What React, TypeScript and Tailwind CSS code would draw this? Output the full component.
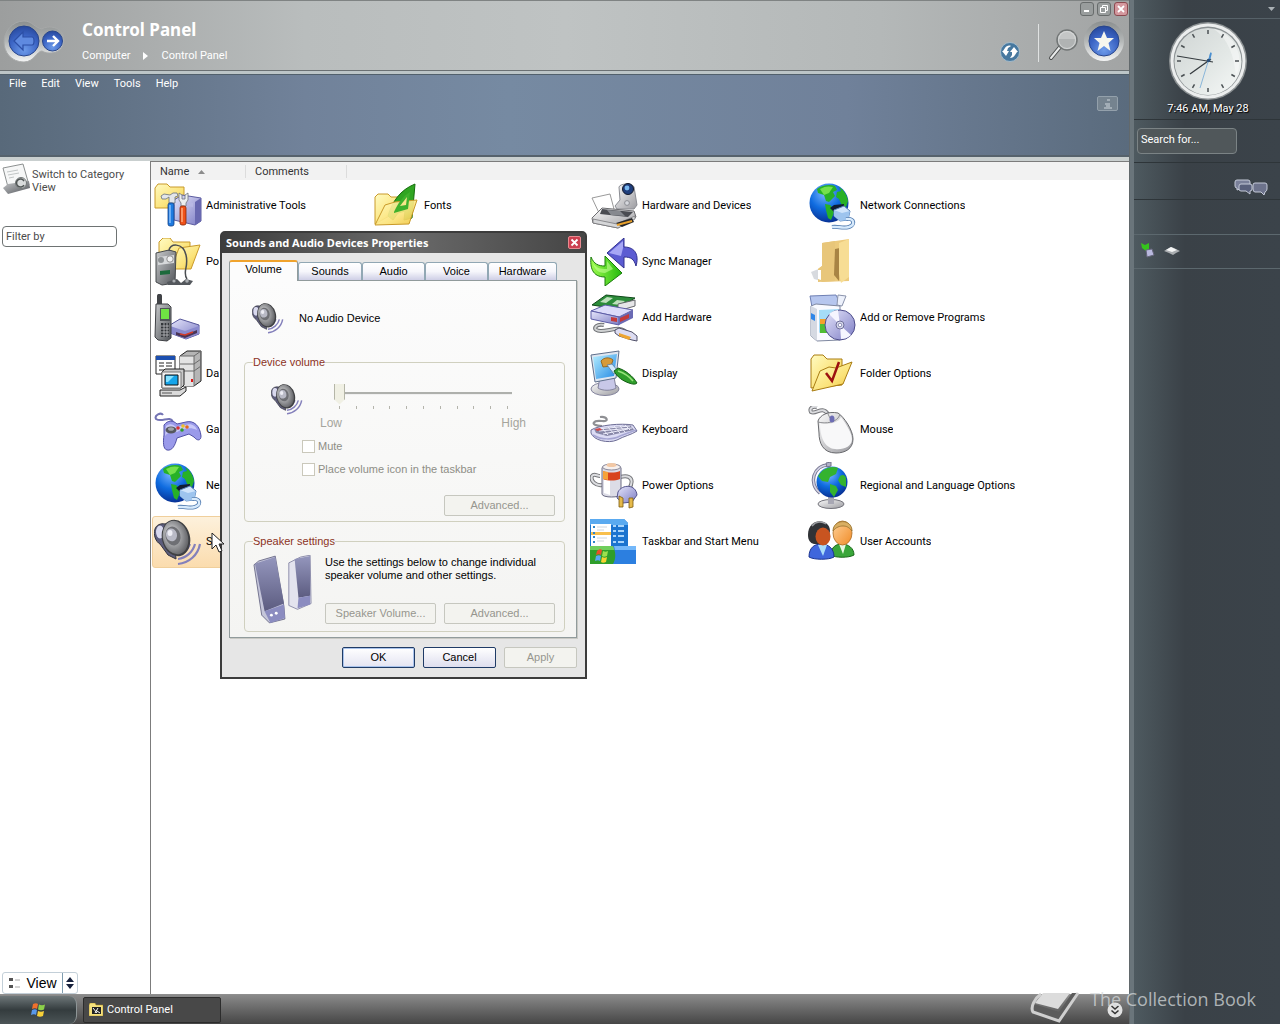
import React, { useState } from 'react';

type IconProps = { className?: string };

function Defs() {
  return (
    <svg width="0" height="0" className="absolute" aria-hidden="true">
      <defs>
        <linearGradient id="folder" x1="0" y1="0" x2="1" y2="1">
          <stop offset="0" stopColor="#fffbc2" />
          <stop offset="0.6" stopColor="#fbe37a" />
          <stop offset="1" stopColor="#eec23c" />
        </linearGradient>
        <linearGradient id="purple" x1="0" y1="0" x2="1" y2="1">
          <stop offset="0" stopColor="#e6e6fb" />
          <stop offset="1" stopColor="#7c7cc4" />
        </linearGradient>
        <linearGradient id="grey" x1="0" y1="0" x2="1" y2="1">
          <stop offset="0" stopColor="#fbfbfb" />
          <stop offset="1" stopColor="#9b9ba0" />
        </linearGradient>
        <linearGradient id="dark" x1="0" y1="0" x2="1" y2="1">
          <stop offset="0" stopColor="#c9cbcd" />
          <stop offset="1" stopColor="#505358" />
        </linearGradient>
        <linearGradient id="green" x1="0" y1="0" x2="1" y2="0">
          <stop offset="0" stopColor="#9dfc4e" />
          <stop offset="1" stopColor="#22b80c" />
        </linearGradient>
        <linearGradient id="screen" x1="0" y1="0" x2="1" y2="1">
          <stop offset="0" stopColor="#b7efff" />
          <stop offset="1" stopColor="#2188e4" />
        </linearGradient>
        <linearGradient id="skin" x1="0" y1="0" x2="1" y2="1">
          <stop offset="0" stopColor="#ffd199" />
          <stop offset="1" stopColor="#f08c28" />
        </linearGradient>
        <linearGradient id="chrome" x1="0" y1="0" x2="0" y2="1">
          <stop offset="0" stopColor="#8b8f8f" />
          <stop offset="0.5" stopColor="#b4b7b7" />
          <stop offset="1" stopColor="#f4f5f5" />
        </linearGradient>
        <linearGradient id="speaker" x1="0" y1="0" x2="0" y2="1">
          <stop offset="0" stopColor="#9496bd" />
          <stop offset="1" stopColor="#5c5c80" />
        </linearGradient>
        <radialGradient id="ball" cx="0.4" cy="0.25" r="0.8">
          <stop offset="0" stopColor="#7db8ff" />
          <stop offset="0.5" stopColor="#0f6ce0" />
          <stop offset="1" stopColor="#062a8c" />
        </radialGradient>
        <radialGradient id="navBlue" cx="0.5" cy="0.8" r="0.8">
          <stop offset="0" stopColor="#6d9bea" />
          <stop offset="0.6" stopColor="#3b64c4" />
          <stop offset="1" stopColor="#27489c" />
        </radialGradient>
        <radialGradient id="cone" cx="0.4" cy="0.4" r="0.7">
          <stop offset="0" stopColor="#f2f2f2" />
          <stop offset="0.5" stopColor="#9a9b9e" />
          <stop offset="1" stopColor="#55565a" />
        </radialGradient>
        <linearGradient id="face" x1="0" y1="0" x2="1" y2="1">
          <stop offset="0" stopColor="#cfd4d3" />
          <stop offset="0.6" stopColor="#e4e9e7" />
          <stop offset="1" stopColor="#f7f9f8" />
        </linearGradient>
      </defs>
    </svg>
  );
}

function AdminToolsIcon() {
  return (
    <svg viewBox="0 0 48 48" className="size-12 shrink-0">
      <path d="M1 26V6l3-4h9l3 3h14v21z" fill="url(#folder)" stroke="#c99a2a" />
      <path d="M20 18l8-5 19 3v23l-6 4-21-5z" fill="url(#purple)" stroke="#5c5ca0" />
      <path d="M41 20v23l6-4V16z" fill="#6868b0" />
      <path d="M33 20l6 1v4l-6-1z" fill="#b9b9e4" />
      <path d="M7 14l3-2 6 1 3-2h4l1 3-3 1v6h-6v-6l-3 2H8z" fill="#e3e6ea" stroke="#66707c" strokeWidth="0.8" />
      <rect x="14" y="21" width="6" height="23" rx="2" fill="#1f7be0" stroke="#123f86" strokeWidth="0.8" />
      <path d="M16 23v18" stroke="#8ec4ff" strokeWidth="1.4" />
      <path d="M25 11v7l2 3v3h5v-3l2-3v-7l-3 2v4h-3v-4z" fill="#eceef0" stroke="#6d7279" strokeWidth="0.8" />
      <rect x="26" y="24" width="6" height="19" rx="2" fill="#f0521a" stroke="#8b2403" strokeWidth="0.8" />
      <path d="M28 26v14" stroke="#ffb488" strokeWidth="1.4" />
    </svg>
  );
}

function FontsIcon() {
  return (
    <svg viewBox="0 0 48 48" className="size-12 shrink-0">
      <path d="M3 42V15l3-3h10l3 3h14v10z" fill="url(#folder)" stroke="#c99a2a" />
      <path d="M16 34C20 20 28 8 43 2l-3 34-8 2 1-9-7 2-5 7z" fill="#31a522" stroke="#156e0c" />
      <path d="M28 25l7-2 1-11z" fill="#d8f5c6" />
      <path d="M3 43l10-20 10-3 22-2-8 24z" fill="url(#folder)" fillOpacity="0.92" stroke="#c99a2a" />
      <path d="M22 30c4-9 9-16 16-20l-2 17-14 4z" fill="#3fb12c" />
      <path d="M28 24l6-1 1-8z" fill="#f9e68a" />
    </svg>
  );
}

function HardwareIcon() {
  return (
    <svg viewBox="0 0 48 48" className="size-12 shrink-0">
      <path d="M29 5c1-4 14-4 15 0l3 18-3 4H27l-2-3 5-6z" fill="url(#grey)" stroke="#8b8d93" />
      <circle cx="38" cy="7" r="5.5" fill="#1f3e7c" stroke="#11182a" />
      <circle cx="37" cy="6" r="2.4" fill="#79b7ef" />
      <circle cx="37" cy="21" r="2.4" fill="#d6d8dd" stroke="#8b8d93" />
      <path d="M2 16l18-4 4 15-14 6z" fill="#fff" stroke="#9a9a9a" />
      <path d="M2 36l10-10 32 3 2 6-18 11-25-5z" fill="url(#grey)" stroke="#6c6c70" />
      <path d="M12 27l31 3-5 5-28-3z" fill="#4a4c52" />
      <path d="M17 28l13 1 5 5-14-1z" fill="#86898f" />
      <path d="M3 37l24 5 18-8v3L28 46 3 41z" fill="#d5d6d8" stroke="#78787c" strokeWidth="0.8" />
      <path d="M26 41l16-5 2 4-12 5z" fill="#25262a" />
      <path d="M27 43l15-4" stroke="#e8a02a" strokeWidth="2" />
    </svg>
  );
}

function NetworkIcon() {
  return (
    <svg viewBox="0 0 48 48" className="size-12 shrink-0">
      <circle cx="21" cy="21" r="19.5" fill="url(#ball)" />
      <path d="M9 7C14 3 22 2 27 4l2 4-4 2 2 4-6 6-3-1-2-6-6-2zM31 5c5 3 8 8 9 14l-2 6-4-1-3-7-3-2 1-5 4-1zM17 22l5 1 5 5-4 10-3-2-2-8z" fill="#27b127" />
      <path d="M12 7c5-3 9-3 13-2l-4 6-5 2z" fill="#75e04c" />
      <path d="M22 26l4-3 10-1v7l-9 2z" fill="#101c33" />
      <path d="M26 28l10-4 6 5-2 9-8 1-6-5z" fill="#cfe4fb" stroke="#5782b9" />
      <path d="M26 28l8 3 8-2-2 9-8 1-6-5z" fill="#9dc4ee" />
      <path d="M38 37c9-1 9 6 3 8-7 2-10-1-17 0" fill="none" stroke="#4d78ae" strokeWidth="4" />
      <path d="M38 37c9-1 9 6 3 8-7 2-10-1-17 0" fill="none" stroke="#d7eafc" strokeWidth="2.4" />
    </svg>
  );
}

function MediaDeviceIcon() {
  return (
    <svg viewBox="0 0 48 48" className="size-12 shrink-0">
      <path d="M5 28V4l4-4h7l3 4h17v18z" fill="url(#folder)" stroke="#c99a2a" />
      <path d="M17 31l8-21 21-3-9 24z" fill="url(#folder)" stroke="#c99a2a" />
      <path d="M2 15l13-3 7 2-1 31-13 2-6-3z" fill="url(#dark)" stroke="#45484b" />
      <path d="M4 19l16-2v8L4 27z" fill="#d7d9db" />
      <circle cx="7" cy="22" r="3" fill="#8d9194" />
      <circle cx="16" cy="21" r="3.2" fill="#f1f2f3" stroke="#777" strokeWidth="0.8" />
      <path d="M6 33l10-1v4L6 37z" fill="#1c6a3c" />
      <path d="M15 13c0-8 14-9 17 4 3 12-4 17 1 24" fill="none" stroke="#4b4e52" strokeWidth="1.5" />
      <path d="M13 44l10-3 4 4 5-4 7 2-3 4H14z" fill="#54585d" />
      <circle cx="20" cy="43" r="1.6" fill="#a9adb1" />
      <circle cx="33" cy="43" r="1.8" fill="#a9adb1" />
    </svg>
  );
}

function SyncIcon() {
  return (
    <svg viewBox="0 0 48 48" className="size-12 shrink-0">
      <path d="M17 15L34 0v9c12 0 15 9 12 19-2-7-5-9-12-9v11z" fill="#5c5cd2" stroke="#30308f" />
      <path d="M19 15L33 3v7l-2 8z" fill="#a7a7f5" />
      <path d="M1 19c3 7 7 9 14 9V18l17 17-17 13v-9C2 39 0 29 1 19z" fill="url(#green)" stroke="#1b7a0d" />
      <path d="M3 25c3 5 7 6 14 6v-8l6 8-8 4C8 35 4 31 3 25z" fill="#c5ff94" opacity="0.6" />
    </svg>
  );
}

function TallFolderIcon() {
  return (
    <svg viewBox="0 0 48 48" className="size-12 shrink-0">
      <path d="M3 34l10-4v13l-7-2z" fill="#c6cbd2" opacity="0.7" />
      <path d="M14 5l27-4v42l-27 1-4-3V31l4-3z" fill="#ecca7c" />
      <path d="M14 5l13-2v40l-17 1V31l4-3z" fill="#e8c67a" />
      <path d="M27 11l5-1-1 33-5-6z" fill="#a88444" />
      <path d="M31 5l10-4v38l-8 6-2-9z" fill="#f7dd94" />
      <path d="M10 32h3v10l-3-1z" fill="#fff" />
    </svg>
  );
}

function PhoneIcon() {
  return (
    <svg viewBox="0 0 48 48" className="size-12 shrink-0">
      <path d="M16 31l10-6 19 6v9l-13 5-16-6z" fill="url(#purple)" stroke="#55559a" />
      <path d="M16 32l15 5 14-5v8l-13 5-16-6z" fill="#8a8ace" />
      <path d="M22 38l9 3 12-5v3l-12 5-9-3z" fill="#4a3556" />
      <path d="M26 40l5 1 8-3" stroke="#d33b28" strokeWidth="1.5" fill="none" />
      <path d="M3 2c0-3 5-3 5 0v8H3z" fill="#414347" />
      <path d="M2 10h12l3 3v31l-4 3-9-1-3-3z" fill="url(#dark)" stroke="#3f4145" />
      <path d="M6 14h10v13H6z" fill="#505458" />
      <path d="M7 15h8v10H7z" fill="#6fe243" />
      <path d="M7 29h8v14H7z" fill="#33363a" />
      <path d="M7 32h8M7 35h8M7 38h8M7 41h8M10 29v14M13 29v14" stroke="#c0c2c5" strokeWidth="0.8" />
    </svg>
  );
}

function AddHardwareIcon() {
  return (
    <svg viewBox="0 0 48 48" className="size-12 shrink-0">
      <path d="M2 11L16 1l29 3-17 11z" fill="#2c8c3a" stroke="#10491a" />
      <path d="M10 8l7-5 6 1-7 5zM22 10l5-4 8 1-5 4z" fill="#bfe0bd" />
      <path d="M28 10l17-4v6l-17 5z" fill="#e6e6e8" stroke="#66686c" />
      <path d="M1 17l14-6 28 5-14 7z" fill="#dcdcfa" stroke="#5d5da6" />
      <path d="M1 17l28 6v8L1 25z" fill="url(#purple)" stroke="#5d5da6" />
      <path d="M29 23l14-7v8l-14 7z" fill="#6a6ab4" />
      <path d="M21 23l6 1v4l-6-1zM30 24l9-4v4l-9 4z" fill="#c43a3a" />
      <path d="M14 31c-9-2-13 6-3 6 9 0 20-6 26 2" fill="none" stroke="#707276" strokeWidth="4" />
      <path d="M14 31c-9-2-13 6-3 6 9 0 20-6 26 2" fill="none" stroke="#cfd1d2" strokeWidth="2" />
      <path d="M25 36l4-2 13 4 5 4v5l-5-1-13-4-4-3z" fill="#dcdcf2" stroke="#505068" />
      <path d="M29 39l12 4-2 3-10-4z" fill="#eda532" />
    </svg>
  );
}

function ProgramsIcon() {
  return (
    <svg viewBox="0 0 48 48" className="size-12 shrink-0">
      <path d="M2 2l26-1 4 8-6 4H4z" fill="#b6c6ee" stroke="#6f80b4" />
      <path d="M30 1l8 1-4 10-5-1z" fill="#edf1fb" stroke="#8a93ac" />
      <path d="M3 12l5-2 24 2v34l-23 1-6-5z" fill="#f9faff" stroke="#7f88a0" />
      <path d="M3 12l6 3v32l-6-5z" fill="#d5d9e2" />
      <path d="M3 19l4 2v6l-4-2z" fill="#2f86e8" />
      <path d="M11 16l20-1v11L11 39z" fill="#a5dcf7" />
      <path d="M12 27h8v12h-8z" fill="#4fbd33" />
      <path d="M12 25h8v5h-8z" fill="#f4a12a" />
      <circle cx="32" cy="31" r="15" fill="url(#purple)" stroke="#4d4d8b" />
      <path d="M32 31L21 20a15 15 0 0 1 9-4zM32 31l11 10a15 15 0 0 1-10 4z" fill="#f5f5ff" />
      <circle cx="32" cy="31" r="4" fill="#d9dcec" stroke="#6f6f9b" />
      <circle cx="32" cy="31" r="1.8" fill="#fff" stroke="#8e8eb8" />
    </svg>
  );
}

function DataIcon() {
  return (
    <svg viewBox="0 0 48 48" className="size-12 shrink-0">
      <path d="M26 6l7-5h14v30l-7 5H26z" fill="#b5b5b5" stroke="#222" />
      <path d="M26 6h14v30H26z" fill="#e3e3e3" />
      <path d="M26 6h14l7-5M26 14h14l7-5M26 21h14l7-5M40 6v30" fill="none" stroke="#6b6b6b" />
      <path d="M37 29h2v3h-2z" fill="#e01818" />
      <path d="M2 6h19v18H2z" fill="#fff" stroke="#222" />
      <path d="M2 6h19v4H2z" fill="#1c4fb0" />
      <path d="M5 13h5M12 13h6M5 16h5M12 16h6M5 20h5M12 20h6" stroke="#222" />
      <path d="M8 22l3-3h19v16l-3 3H8z" fill="#c9c9c9" stroke="#222" />
      <path d="M8 22h19v16H8z" fill="#f0f0f0" stroke="#777" />
      <path d="M11 25h13v10H11z" fill="#16a5ea" stroke="#111" />
      <path d="M12 26h8l-6 6h-2z" fill="#86e2ff" />
      <path d="M6 40h20l6-3v4l-6 5H6z" fill="#dadada" stroke="#222" />
      <path d="M8 43h10" stroke="#555" />
    </svg>
  );
}

function DisplayIcon() {
  return (
    <svg viewBox="0 0 48 48" className="size-12 shrink-0">
      <ellipse cx="15" cy="39" rx="14" ry="6.5" fill="url(#grey)" stroke="#83839c" />
      <path d="M10 27h14l2 11c-4 3-14 3-18 0z" fill="#c8c8e8" stroke="#83839c" />
      <path d="M1 5l28-4-3 27-21 4z" fill="#dfe6f0" stroke="#5e6f8c" />
      <path d="M3 7l24-3-3 22-18 3z" fill="url(#screen)" />
      <path d="M11 11c3-4 9-4 12-1l-2 6-8 1z" fill="#d69a3a" stroke="#8d5a10" strokeWidth="0.8" />
      <path d="M17 15l5-1 6 7-4 3z" fill="#cfe8fb" stroke="#5d7c9c" strokeWidth="0.8" />
      <path d="M24 21l4-3c7 2 15 8 19 15-2 2-5 1-8 0-6-2-12-6-15-12z" fill="#2f9e2b" stroke="#125c12" />
      <path d="M28 21c6 2 11 5 15 10" stroke="#98e27c" strokeWidth="1.5" fill="none" />
    </svg>
  );
}

function FolderOptionsIcon() {
  return (
    <svg viewBox="0 0 48 48" className="size-12 shrink-0">
      <path d="M3 38V9l3-4h9l4 4h15v26z" fill="url(#folder)" stroke="#a97c12" />
      <path d="M4 41l8-20 9-4 7 1 16-6-9 22z" fill="url(#folder)" stroke="#a97c12" />
      <path d="M18 23l6 8 7-19" fill="none" stroke="#9c1010" strokeWidth="2.5" />
    </svg>
  );
}

function GameIcon() {
  return (
    <svg viewBox="0 0 48 48" className="size-12 shrink-0">
      <path d="M19 16c-3-7-11 1-17-3-2-4 5-7 7-4" fill="none" stroke="#7474b4" strokeWidth="2" />
      <path d="M10 19c4-5 9-5 13-1l9-2c8-2 14 4 15 14 0 5-4 5-7 1l-5-3-12 4c-2 8-5 13-10 12-4-1-4-8-3-15z" fill="#9a9aea" stroke="#5151a6" />
      <path d="M12 20c4-3 7-2 10 1l10-2c5-2 10 1 11 5-6-3-14-2-20 2-6-1-10 1-12 4z" fill="#d4d4fb" opacity="0.8" />
      <ellipse cx="17" cy="24" rx="5.5" ry="3.5" fill="#55575e" />
      <ellipse cx="17" cy="23" rx="3" ry="1.8" fill="#9fa3a9" />
      <circle cx="24" cy="22" r="1.8" fill="#d83030" />
      <circle cx="29" cy="20" r="1.8" fill="#f0c128" />
      <circle cx="28" cy="24" r="1.8" fill="#2f9e2b" />
      <circle cx="33" cy="21" r="1.8" fill="#e26a1c" />
    </svg>
  );
}

function KeyboardIcon() {
  return (
    <svg viewBox="0 0 48 48" className="size-12 shrink-0">
      <path d="M12 20c-14-1-8-6 0-5s5-5-2-4" fill="none" stroke="#8f9094" strokeWidth="2.2" />
      <path d="M1 24c8-5 30-7 42-5l4 6c-6 4-13 5-20 9-9 4-24 0-26-7z" fill="#dcdcf4" stroke="#6c6c94" />
      <path d="M4 23l36-4 4 5-27 6-11-3z" fill="#8888a8" />
      <path d="M7 23l33-3M9 25l33-3M13 28l25-5M12 22l6 7M18 21l6 7M24 20l6 7M30 20l5 6M35 19l5 5" stroke="#ececfa" strokeWidth="1" />
      <path d="M5 23l5-1 2 2-5 1z" fill="#d34a4a" />
      <path d="M3 29c8 5 20 5 27 1l16-6" fill="none" stroke="#a5a5d2" strokeWidth="1.5" />
    </svg>
  );
}

function MouseIcon() {
  return (
    <svg viewBox="0 0 48 48" className="size-12 shrink-0">
      <path d="M20 8C14-1 8 9 3 6c-2-4 2-6 6-5" fill="none" stroke="#77787c" strokeWidth="4" />
      <path d="M20 8C14-1 8 9 3 6c-2-4 2-6 6-5" fill="none" stroke="#dcdde0" strokeWidth="2" />
      <path d="M10 15c2-6 10-10 20-8 6 4 15 17 15 26 0 10-8 14-17 14-13 0-17-10-17-20z" fill="url(#grey)" stroke="#68696d" />
      <path d="M12 17c5 2 18 1 21-6 5 7 11 16 11 22 0 8-9 11-17 10-11-1-15-13-15-26z" fill="#f8f8f9" />
      <path d="M10 16c7 2 20 1 22-8M19 6l3 6" fill="none" stroke="#8c8d91" />
      <ellipse cx="24" cy="13" rx="2.5" ry="3.5" fill="#6d6db4" />
    </svg>
  );
}

function PowerIcon() {
  return (
    <svg viewBox="0 0 48 48" className="size-12 shrink-0">
      <path d="M12 23C6 24 0 19 2 14c2-3 5 0 8 0M30 15c12-3 14 4 9 12" fill="none" stroke="#77787c" strokeWidth="4" />
      <path d="M12 23C6 24 0 19 2 14c2-3 5 0 8 0M30 15c12-3 14 4 9 12" fill="none" stroke="#dcdde0" strokeWidth="2" />
      <path d="M12 6c0-4 19-4 19 0v26c0 4-19 4-19 0z" fill="#dcdce6" stroke="#6c6c84" />
      <path d="M14 18h6v15l-6-2z" fill="#fff" />
      <ellipse cx="21.5" cy="5" rx="9" ry="3" fill="#f6f0ee" stroke="#8a8a9c" />
      <ellipse cx="21.5" cy="3" rx="5" ry="2" fill="#f2c8a5" />
      <path d="M13 9c5 2 12 2 17 0v8c-5 2-12 2-17 0z" fill="#d8441e" />
      <path d="M13 9l5 1v8l-5-1z" fill="#f6a23a" />
      <path d="M28 30c4-8 18-8 19 3l-5 7-9 1-6-5z" fill="url(#purple)" stroke="#55558e" />
      <path d="M29 34l4 2v9h-4zM39 36h4v9l-4 1z" fill="#e5b94a" stroke="#7c5c10" strokeWidth="0.8" />
    </svg>
  );
}

function RegionalIcon() {
  return (
    <svg viewBox="0 0 48 48" className="size-12 shrink-0">
      <ellipse cx="23" cy="42" rx="13" ry="4.5" fill="url(#grey)" stroke="#74747c" />
      <path d="M20 34h6v8h-6z" fill="#a8a8b4" />
      <path d="M21 3C5 3 0 22 12 31" fill="none" stroke="#7a7a94" strokeWidth="3.5" />
      <path d="M21 3C5 3 0 22 12 31" fill="none" stroke="#d4d4e6" strokeWidth="1.5" />
      <circle cx="24" cy="20" r="15.5" fill="url(#ball)" />
      <path d="M14 9c5-4 12-5 16-3l-2 6-6 3-2 5-6-1-4-5zM32 14c3-2 5-1 6 2v9l-5-2-3-5zM22 22l6 2 2 4-4 7-4-5z" fill="#34b32f" />
      <path d="M18 1l5-1v4l-4 1z" fill="#b0b0c8" stroke="#74748c" />
    </svg>
  );
}

function SoundIcon({ className = 'size-12' }: IconProps) {
  return (
    <svg viewBox="0 0 48 48" className={`${className} shrink-0`}>
      <path d="M24 46c11-1 20-9 22-20M24 41c8-1 15-7 17-15M25 36c5-1 9-5 11-10" fill="none" stroke="#8480bb" strokeWidth="2.2" />
      <path d="M1 11c1-4 6-6 10-5l8-3 3 38-8-4-8-11c-4-2-7-9-5-15z" fill="#5d5d7c" stroke="#35353f" />
      <ellipse cx="6" cy="14" rx="4" ry="6.5" fill="#d9d9ee" />
      <ellipse cx="22" cy="20" rx="14" ry="18.5" fill="#3f4043" transform="rotate(-14 22 20)" />
      <ellipse cx="21.500" cy="19.5" rx="12.5" ry="17" fill="url(#cone)" transform="rotate(-14 21.5 19.5)" />
      <ellipse cx="19" cy="18" rx="7.5" ry="9.5" fill="#6e6f74" transform="rotate(-14 19 18)" />
      <ellipse cx="17.5" cy="17" rx="5.5" ry="6.5" fill="#b9bac6" transform="rotate(-14 17 17)" />
      <ellipse cx="16" cy="15" rx="2.5" ry="3" fill="#ededf4" />
    </svg>
  );
}

function TaskbarIcon() {
  return (
    <svg viewBox="0 0 48 48" className="size-12 shrink-0">
      <path d="M0 1h34l4 4v24H0z" fill="#1c74cf" />
      <path d="M0 1h34l4 4v2H0z" fill="#5aaaf0" />
      <path d="M1 6h20v22H1z" fill="#fff" />
      <path d="M1 14h20v3H1z" fill="#f8bf4c" />
      <path d="M7 9h10M7 12h7M7 20h10M7 23h7" stroke="#cfd6de" />
      <path d="M3 9h2M3 15h2M3 19h2M3 24h2" stroke="#2f86c8" strokeWidth="2" />
      <path d="M23 8h3M23 13h3M23 18h3M23 24h3M28 8h6M28 13h6M28 18h6M28 24h6" stroke="#a8d4fa" strokeWidth="2" />
      <path d="M0 28h26v18H0z" fill="#2f9e2b" />
      <path d="M0 28h26v4H0z" fill="#6fce5c" />
      <path d="M23 28h23v18H23c3-5 3-12 0-18z" fill="#2c7fe0" />
      <path d="M24 28h22v4H25z" fill="#74b8fa" />
      <path d="M7 33c2-2 4-2 5-1l-1 5c-1-1-3-1-5 0z" fill="#e8502a" />
      <path d="M13 33c2 1 3 1 5 0l-1 5c-2 1-4 1-5 0z" fill="#9be04e" />
      <path d="M6 38c2-1 4-1 5 0l-1 5c-1-1-3-1-5 0z" fill="#5aa9f4" />
      <path d="M12 39c2 1 3 1 5 0l-1 5c-2 1-4 1-5 0z" fill="#f8d230" />
    </svg>
  );
}

function UsersIcon() {
  return (
    <svg viewBox="0 0 48 48" className="size-12 shrink-0">
      <path d="M23 37c0-8 5-11 11-11s12 4 12 11c-5 3-19 3-23 0z" fill="#3aa63a" stroke="#186818" />
      <path d="M31 26h7l-3 10z" fill="#e6f8e0" />
      <ellipse cx="34.5" cy="15" rx="9.5" ry="12" fill="url(#skin)" stroke="#a86820" strokeWidth="0.8" />
      <path d="M25 13c0-12 19-13 19 0-3-4-6-5-9-5s-7 1-10 5z" fill="#d9ae62" stroke="#94702c" strokeWidth="0.8" />
      <path d="M1 39c0-9 5-13 12-13s13 4 13 13c-5 3-20 3-25 0z" fill="#3f66dc" stroke="#1b3490" />
      <path d="M10 27h9l-4 11z" fill="#a9dcfa" />
      <path d="M0 17C0-1 22 0 22 13l-3 13H6c-4-1-6-4-6-9z" fill="#303236" />
      <ellipse cx="15" cy="18.5" rx="7.500" ry="9" fill="#c85420" />
      <path d="M4 8c4-5 10-5 14-2" stroke="#9a9ca0" strokeWidth="1.5" fill="none" />
    </svg>
  );
}

function SpeakersPicture() {
  return (
    <svg viewBox="0 0 62 71" className="h-[69px] w-[60px] shrink-0">
      <path d="M1 10l5-4 17-5 9 52 1 13-16 4-8-8z" fill="#c5c6da" stroke="#585878" strokeWidth="0.8" />
      <path d="M2 9l21-7 9 48-20 8z" fill="url(#speaker)" />
      <path d="M12 58l20-7 1 14-15 5z" fill="#8b8cc0" />
      <circle cx="19" cy="62" r="1.5" fill="#fff" />
      <circle cx="24" cy="60" r="1.5" fill="#fff" />
      <path d="M37 8L49 2l10-2 1 50-14 6-9-4z" fill="#e3e3ee" stroke="#77779a" strokeWidth="0.8" />
      <path d="M43 4l16-3v41l-12 2z" fill="url(#speaker)" />
      <path d="M47 44l12-2v9l-13 4z" fill="#8b8cc0" />
    </svg>
  );
}

function WindowsFlag() {
  return (
    <svg viewBox="0 0 16 16" className="size-4">
      <path d="M3 2c2-1 4-1 5 0L7 7C6 6 4 6 2 7z" fill="#f0702c" />
      <path d="M9 2.500c2 1 4 1 6 0l-1 5c-2 1-4 1-6 0z" fill="#8cd04a" />
      <path d="M2 8c2-1 4-1 5 0l-1 5c-1-1-3-1-5 0z" fill="#5a98ea" />
      <path d="M8 9c2 1 4 1 6 0l-1 5c-2 1-4 1-6 0z" fill="#f8d038" />
    </svg>
  );
}

function NavButtons() {
  return (
    <div className="relative h-11 w-16 shrink-0">
      <svg viewBox="0 0 64 44" className="h-11 w-16">
        <path d="M22 2c8 0 11 7 18 8 5-4 22-3 22 11S46 36 40 32c-5 0-8 11-18 11C9 43 2 33 2 23S10 2 22 2z" fill="url(#chrome)" stroke="#a7a9a9" />
        <circle cx="22" cy="22" r="15" fill="url(#navBlue)" stroke="#28468c" />
        <path d="M12 22l9-9v5h9q2 0 2 4t-2 4h-9v5z" fill="#5f8ae0" stroke="#2c4fa6" strokeWidth="1.2" />
        <circle cx="50.500" cy="22" r="10" fill="url(#navBlue)" stroke="#28468c" />
        <path d="M45 22h10M51 17l5 5-5 5" fill="none" stroke="#fff" strokeWidth="2.4" />
      </svg>
      <button aria-label="Back" className="absolute left-1.5 top-1.5 size-8 rounded-full" />
      <button aria-label="Forward" className="absolute left-10 top-3 size-5 rounded-full" />
    </div>
  );
}

function Clock() {
  const ticks = Array.from({ length: 12 }, (_, i) => i * 30);
  return (
    <svg viewBox="0 0 80 80" className="size-20">
      <circle cx="40" cy="40" r="39" fill="#8d9294" />
      <circle cx="40" cy="40" r="37.5" fill="#eceeee" />
      <circle cx="40" cy="40" r="34.5" fill="#8b9193" />
      <circle cx="40" cy="40.5" r="33.5" fill="url(#face)" />
      <path d="M46 8a33 33 0 0 1 22 47C66 34 60 18 46 8z" fill="#fff" opacity="0.4" />
      {ticks.map((a) => (
        <path key={a} d="M40 9v4" stroke="#4b5154" strokeWidth="1.5" transform={`rotate(${a} 40 40)`} />
      ))}
      <path d="M45 41L9 35" stroke="#353b3f" strokeWidth="1.1" />
      <path d="M43 38L22 53" stroke="#353b3f" strokeWidth="1.3" />
      <path d="M43 31L32 67" stroke="#7fb0d8" strokeWidth="0.9" />
      <path d="M43 32l-2 8" stroke="#4a8fd0" strokeWidth="1.8" />
      <circle cx="40.5" cy="39.5" r="1.8" fill="#2b4f78" />
    </svg>
  );
}

const items: { id: string; name: string; icon: React.ReactNode; selected?: boolean }[] = [
  { id: 'admin', name: 'Administrative Tools', icon: <AdminToolsIcon /> },
  { id: 'fonts', name: 'Fonts', icon: <FontsIcon /> },
  { id: 'hardware', name: 'Hardware and Devices', icon: <HardwareIcon /> },
  { id: 'network', name: 'Network Connections', icon: <NetworkIcon /> },
  { id: 'portable', name: 'Po', icon: <MediaDeviceIcon /> },
  { id: 'slot1', name: '', icon: null },
  { id: 'sync', name: 'Sync Manager', icon: <SyncIcon /> },
  { id: 'folder', name: '', icon: <TallFolderIcon /> },
  { id: 'phone', name: '', icon: <PhoneIcon /> },
  { id: 'slot2', name: '', icon: null },
  { id: 'addhw', name: 'Add Hardware', icon: <AddHardwareIcon /> },
  { id: 'programs', name: 'Add or Remove Programs', icon: <ProgramsIcon /> },
  { id: 'data', name: 'Da', icon: <DataIcon /> },
  { id: 'slot3', name: '', icon: null },
  { id: 'display', name: 'Display', icon: <DisplayIcon /> },
  { id: 'folderopts', name: 'Folder Options', icon: <FolderOptionsIcon /> },
  { id: 'game', name: 'Ga', icon: <GameIcon /> },
  { id: 'slot4', name: '', icon: null },
  { id: 'keyboard', name: 'Keyboard', icon: <KeyboardIcon /> },
  { id: 'mouse', name: 'Mouse', icon: <MouseIcon /> },
  { id: 'netsetup', name: 'Ne', icon: <NetworkIcon /> },
  { id: 'slot5', name: '', icon: null },
  { id: 'power', name: 'Power Options', icon: <PowerIcon /> },
  { id: 'regional', name: 'Regional and Language Options', icon: <RegionalIcon /> },
  { id: 'sounds', name: 'S', icon: <SoundIcon />, selected: true },
  { id: 'slot6', name: '', icon: null },
  { id: 'taskbar', name: 'Taskbar and Start Menu', icon: <TaskbarIcon /> },
  { id: 'users', name: 'User Accounts', icon: <UsersIcon /> },
];

const tabs = [
  { label: 'Volume', width: 'w-[69px]' },
  { label: 'Sounds', width: 'w-16' },
  { label: 'Audio', width: 'w-[63px]' },
  { label: 'Voice', width: 'w-[63px]' },
  { label: 'Hardware', width: 'w-[69px]' },
];

const disabledButton = 'rounded-[2px] border border-[#c6c7bf] bg-[#f3f3ef] text-[#96968e]';

function Dialog() {
  const [mute, setMute] = useState(false);
  const [tray, setTray] = useState(false);

  return (
    <div
      role="dialog"
      aria-label="Sounds and Audio Devices Properties"
      className="absolute left-[220px] top-[231px] w-[367px] rounded-t-[5px] border-2 border-[#3c3c3c] bg-[#e6e6e6] font-['Liberation_Sans',sans-serif] text-[11px] leading-[13px] text-black"
    >
      <div className="flex h-5 items-center justify-between bg-linear-to-r from-[#3d3d3d] via-[#6a6a6a] to-[#454545] px-1 pb-px">
        <h2 className="font-['Noto_Sans',sans-serif] text-[11px] font-bold text-white">Sounds and Audio Devices Properties</h2>
        <button aria-label="Close" className="flex size-[13px] items-center justify-center rounded-[2px] border border-[#e88a90] bg-[#cc4050]">
          <svg viewBox="0 0 9 9" className="size-[9px]">
            <path d="M1.500 1.500l6 6M7.500 1.500l-6 6" stroke="#fff" strokeWidth="1.8" />
          </svg>
        </button>
      </div>

      <div className="pb-[9px] pl-[7px] pr-2 pt-[7px]">
        <div role="tablist" className="relative flex items-end">
          {tabs.map((tab, i) => (
            <button
              key={tab.label}
              role="tab"
              aria-selected={i === 0}
              className={`${tab.width} ${
                i === 0
                  ? 'z-10 -mb-px h-[21px] rounded-t-[3px] border-x border-t-2 border-x-[#919b9c] border-t-[#f0a32c] bg-[#fcfcfc] pb-1'
                  : 'h-[18px] rounded-t-[3px] border border-b-0 border-[#91a7b4] bg-linear-to-b from-white via-[#f6f6fb] to-[#cfcfe6]'
              }`}
            >
              {tab.label}
            </button>
          ))}
        </div>

        <div className="border border-[#919b9c] bg-linear-to-b from-[#fcfcfc] to-[#f4f4f2] pb-[5px] pl-[14px] pr-[11px] pt-[21px] shadow-[1px_1px_0_#c9c9c4]">
          <div className="flex items-center gap-[15px] pl-2">
            <SoundIcon className="size-8" />
            <span>No Audio Device</span>
          </div>

          <fieldset className="mt-[22px] h-[166px] rounded-[4px] border border-[#d0d0bf] pl-2 pr-[9px] text-[#8e8e86]">
            <legend className="px-0 text-[#8c3324]">Device volume</legend>
            <div className="flex pl-[18px] pt-[14px]">
              <SoundIcon className="size-8" />
              <div className="ml-[31px] w-[184px]">
                <input
                  id="volume"
                  type="range"
                  min={0}
                  max={10}
                  defaultValue={0}
                  disabled
                  aria-label="Device volume"
                  className="block h-5 w-[178px] appearance-none bg-transparent [&::-webkit-slider-runnable-track]:h-[3px] [&::-webkit-slider-runnable-track]:border-t-2 [&::-webkit-slider-runnable-track]:border-[#aeb0ac] [&::-webkit-slider-runnable-track]:bg-[#f0f0f0] [&::-webkit-slider-thumb]:-mt-[10px] [&::-webkit-slider-thumb]:h-[21px] [&::-webkit-slider-thumb]:w-[11px] [&::-webkit-slider-thumb]:appearance-none [&::-webkit-slider-thumb]:bg-[linear-gradient(to_right,#b5b6a8_0_1px,#f0f0e4_1px_10px,#b5b6a8_10px)] [&::-webkit-slider-thumb]:[clip-path:polygon(0_0,100%_0,100%_75%,50%_100%,0_75%)]"
                />
                <div className="ml-[5px] mt-[3px] flex h-1 w-[169px] justify-between">
                  {Array.from({ length: 11 }, (_, i) => (
                    <span key={i} className="h-[3px] w-px bg-[#b4b4ac]" />
                  ))}
                </div>
              </div>
            </div>
            <div className="flex justify-between pl-[67px] pr-[29px] text-[12px] leading-4 text-[#a5a59d]">
              <span>Low</span>
              <span>High</span>
            </div>
            <div className="mt-[9px] flex flex-col gap-[10px] pl-[49px]">
              <label className="flex items-center gap-[3px]">
                <input type="checkbox" checked={mute} onChange={() => setMute(!mute)} className="size-[13px] appearance-none border border-[#cac8bb] bg-white" />
                Mute
              </label>
              <label className="flex items-center gap-[3px]">
                <input type="checkbox" checked={tray} onChange={() => setTray(!tray)} className="size-[13px] appearance-none border border-[#cac8bb] bg-white" />
                Place volume icon in the taskbar
              </label>
            </div>
            <div className="mt-[19px] flex justify-end">
              <button disabled className={`${disabledButton} h-[21px] w-[111px]`}>Advanced...</button>
            </div>
          </fieldset>

          <fieldset className="mt-[13px] h-[97px] rounded-[4px] border border-[#d0d0bf] pl-2 pr-[9px]">
            <legend className="px-0 text-[#8c3324]">Speaker settings</legend>
            <div className="flex justify-between pt-[7px]">
              <SpeakersPicture />
              <div className="flex flex-col justify-between pt-px">
                <p>
                  Use the settings below to change individual
                  <br />
                  speaker volume and other settings.
                </p>
                <div className="flex gap-2">
                  <button disabled className={`${disabledButton} h-[21px] w-[111px]`}>Speaker Volume...</button>
                  <button disabled className={`${disabledButton} h-[21px] w-[111px]`}>Advanced...</button>
                </div>
              </div>
            </div>
          </fieldset>
        </div>

        <div className="mt-[9px] flex justify-end gap-2">
          <button className="h-[21px] w-[73px] rounded-[2px] border border-[#1f3b66] bg-linear-to-b from-white to-[#e4e4f2] shadow-[inset_0_0_0_1px_#a9c3ec]">OK</button>
          <button className="h-[21px] w-[73px] rounded-[2px] border border-[#1f3b66] bg-linear-to-b from-white to-[#dedeee]">Cancel</button>
          <button disabled className={`${disabledButton} h-[21px] w-[73px]`}>Apply</button>
        </div>
      </div>
    </div>
  );
}

function SidePanel() {
  return (
    <aside className="flex w-[150px] shrink-0 flex-col border-l-4 border-[#6a757b] bg-linear-to-r from-[#4e5a60] via-[#3a4147] via-35% to-[#3b434a] text-white">
      <div className="flex h-[18px] items-center justify-end px-1">
        <svg viewBox="0 0 8 8" className="size-2">
          <path d="M0 2h7L3.500 6z" fill="#aab1b5" />
        </svg>
      </div>
      <div className="flex h-[101px] flex-col items-center border-t border-[#566168] pl-0.5 pt-0.5">
        <Clock />
        <p className="mt-px text-[11px] leading-[13px] [text-shadow:1px_1px_1px_#000]">7:46 AM, May 28</p>
      </div>
      <div className="h-[43px] border-t border-[#2e3539] pl-[3px] pt-2">
        <input
          type="text"
          aria-label="Search for"
          placeholder="Search for..."
          className="block h-[26px] w-[100px] rounded-[4px] border border-[#7b8385] bg-[#50575a] px-[3px] pb-1 text-[11px] placeholder:text-white"
        />
      </div>
      <div className="flex h-[37px] items-center justify-end border-t border-[#2e3539] pr-3 pt-3">
        <svg viewBox="0 0 34 17" className="h-[17px] w-[34px]" stroke="#c5cad8" fill="#7a809a">
          <path d="M3 1h11q2 0 2 2v5q0 2-2 2H6l-3 1V9Q1 9 1 7V3q0-2 2-2z" />
          <path d="M7 5h9q2 0 2 2v3q0 2-2 2v3l-4-3H7q-2 0-2-2V7q0-2 2-2z" fill="#59607c" />
          <path d="M21 4h10q2 0 2 2v4q0 2-2 3l-1 3-3-3h-6q-2 0-2-3V6q0-2 2-2z" fill="#6d738c" />
        </svg>
      </div>
      <div className="h-[35px] border-t border-[#2e3539]" />
      <div className="flex h-[35px] items-center gap-2 border-y border-[#5c686e] pb-1 pl-1.5">
        <svg viewBox="0 0 16 16" className="size-4">
          <path d="M1 1l4 2 4-2v6l2 2H6L2 6z" fill="#35c41c" />
          <path d="M6 8l6-1 2 6-7 2z" fill="#b9b9de" stroke="#65657a" />
        </svg>
        <svg viewBox="0 0 16 16" className="size-4">
          <path d="M0 9l5-3 2-1 3 1 6 3-4 2-3 2-4-2z" fill="#a9adb0" />
          <path d="M2 8l5-3 6 3-5 2z" fill="#f4f5f5" />
        </svg>
      </div>
    </aside>
  );
}

export default function App() {
  const [filter, setFilter] = useState('');

  return (
    <div className="relative flex min-h-screen overflow-hidden bg-white font-[Roboto,sans-serif] text-[11px] leading-[13px] text-black">
      <Defs />
      <div className="flex min-w-0 flex-1 flex-col border-r border-[#62696c]">
        <header className="flex h-[71px] border-b border-t border-b-[#6a7073] border-t-[#7f8383] bg-[linear-gradient(to_right,#9c9e9e,#b9bdbd_27%,#bfc3c3_50%,#b4b8b8_78%,#a2a4a4)] text-white">
          <div className="flex flex-1 items-start gap-4 pl-0.5 pt-[18px]">
            <NavButtons />
            <div>
              <h1 className="font-['Noto_Sans',sans-serif] text-[17px] font-bold leading-[22px]">Control Panel</h1>
              <nav className="mt-2 flex items-center gap-[13px]">
                <a href="#computer">Computer</a>
                <svg viewBox="0 0 5 8" className="h-2 w-[5px]">
                  <path d="M0 0v8l5-4z" fill="#fff" />
                </svg>
                <a href="#control-panel">Control Panel</a>
              </nav>
            </div>
          </div>
          <div className="flex flex-col items-end">
            <div className="flex gap-[3px] pr-px pt-px">
              <button aria-label="Minimize" className="flex size-[14px] items-center justify-center rounded-[3px] border border-[#686c6c] bg-[#999d9d]">
                <svg viewBox="0 0 8 8" className="size-2"><path d="M1 6h5" stroke="#fff" strokeWidth="2" /></svg>
              </button>
              <button aria-label="Restore" className="flex size-[14px] items-center justify-center rounded-[3px] border border-[#686c6c] bg-[#999d9d]">
                <svg viewBox="0 0 8 8" className="size-2"><path d="M2.500 2.500v-2h5v5h-2M.5 2.500h5v5h-5z" fill="none" stroke="#fff" /></svg>
              </button>
              <button aria-label="Close window" className="flex size-[14px] items-center justify-center rounded-[3px] border border-[#8b4a50] bg-[#d4989e]">
                <svg viewBox="0 0 8 8" className="size-2"><path d="M1 1l6 6M7 1L1 7" stroke="#fff" strokeWidth="1.8" /></svg>
              </button>
            </div>
            <div className="flex items-center pr-1 pt-1">
              <button aria-label="Refresh" className="mr-[18px] self-end">
                <svg viewBox="0 0 20 20" className="size-5">
                  <circle cx="10" cy="10" r="9.5" fill="#47789f" stroke="#a9c3d4" strokeWidth="0.8" />
                  <path d="M3 9l2-3c1-2 4-3 6-2L8 6l-1 3h2l-3 5-4-5zM17 10l-2 3c-1 2-3 3-5 3l2-3v-3h-2l4-5 4 5z" fill="#fff" />
                </svg>
              </button>
              <span className="mr-2 mt-1 h-[38px] w-px bg-[#e0e2e2]" />
              <button aria-label="Search" className="mt-2">
                <svg viewBox="0 0 32 34" className="h-[34px] w-8">
                  <path d="M4 30l9-11" stroke="#4c4f4f" strokeWidth="4" strokeLinecap="round" />
                  <path d="M4 30l9-11" stroke="#e9ebeb" strokeWidth="2" strokeLinecap="round" />
                  <circle cx="20" cy="12" r="10" fill="#b0b3b3" stroke="#727676" strokeWidth="1.5" />
                  <path d="M11 11a9 8 0 0 1 18 0z" fill="#c4c6c6" />
                  <circle cx="20" cy="12" r="8.5" fill="none" stroke="#dcdede" strokeWidth="0.8" />
                </svg>
              </button>
              <button aria-label="Favorites" className="ml-1">
                <svg viewBox="0 0 42 42" className="size-[42px]">
                  <circle cx="21" cy="21" r="20" fill="url(#chrome)" />
                  <circle cx="21" cy="21" r="15" fill="url(#navBlue)" stroke="#28468c" />
                  <path d="M21 11l3 7h7l-5.500 5 2 8-6.500-5-6.500 5 2-8-5.500-5h7z" fill="#f6f6ee" />
                </svg>
              </button>
            </div>
          </div>
        </header>

        <div className="flex h-[90px] justify-between border-b-4 border-t-[3px] border-b-[#c9cfcf] border-t-[#bcc5c7] bg-[linear-gradient(to_right,#58697a,#71829a_27%,#768aa2_45%,#70819a_75%,#5a6b7d)] text-white shadow-[inset_0_1px_0_#51606c,inset_0_-2px_0_#56626c]">
          <nav className="flex gap-[15px] pl-[9px] pt-[3px]">
            <a href="#file">File</a>
            <a href="#edit">Edit</a>
            <a href="#view">View</a>
            <a href="#tools">Tools</a>
            <a href="#help">Help</a>
          </nav>
          <button aria-label="Information" className="mr-[11px] mt-[22px] flex h-[15px] w-[21px] items-center justify-center rounded-[2px] border border-[#93a0ab] bg-[#75838f]">
            <svg viewBox="0 0 8 10" className="h-[10px] w-2"><path d="M3 0h3v2H3zM1 4h5v4h2v2H0V8h2V6H1z" fill="#a2adb6" /></svg>
          </button>
        </div>

        <div className="flex flex-1">
          <aside className="flex w-[150px] shrink-0 flex-col pl-0.5 pt-0.5">
            <a href="#category" className="flex items-start text-[#4b4b4b]">
              <svg viewBox="0 0 30 32" className="h-8 w-[30px] shrink-0">
                <path d="M1 5l20-4 6 21-20 6z" fill="#f6f7f7" stroke="#8d9191" />
                <path d="M5 9l11-2M6 12l11-2M7 15l5-1" stroke="#c2c6c6" />
                <path d="M1 25l5-4 21-3 1 7-22 6z" fill="url(#dark)" />
                <circle cx="19" cy="20" r="5.5" fill="#d9dcdc" stroke="#717676" />
                <path d="M22 18a4 4 0 1 0 0 4" fill="none" stroke="#4f5454" strokeWidth="1.5" />
              </svg>
              <span className="pt-[5px]">Switch to Category<br />View</span>
            </a>
            <input
              type="text"
              aria-label="Filter by"
              placeholder="Filter by"
              value={filter}
              onChange={(e) => setFilter(e.target.value)}
              className="mt-[31px] h-[21px] w-[115px] rounded-[4px] border border-[#6e7373] bg-white px-[3px] placeholder:text-[#4b4b4b]"
            />
            <button className="mt-auto flex h-[22px] w-[76px] items-center rounded-[3px] border border-[#c3cfd8] bg-white text-[14px] text-black">
              <svg viewBox="0 0 12 12" className="ml-[6px] size-3">
                <path d="M0 1h4v3H0zM0 8h4v3H0z" fill="#555" />
                <path d="M6 3h5M6 10h5" stroke="#aaa" />
              </svg>
              <span className="flex-1 text-center font-['Liberation_Sans',sans-serif] leading-5">View</span>
              <span className="flex h-full w-[15px] items-center justify-center border-l border-[#7f9db0]">
                <svg viewBox="0 0 8 12" className="h-3 w-2"><path d="M4 0l4 5H0zM4 12L0 7h8z" fill="#16203c" /></svg>
              </span>
            </button>
          </aside>

          <main className="min-w-0 flex-1 border-l border-t border-[#7c7c7c]">
            <div className="flex h-[18px] items-center bg-[#f2f2f2] pt-px text-[#333]">
              <div className="flex w-[95px] items-center gap-[9px] border-r border-[#dcdcdc] pl-[9px]">
                Name
                <svg viewBox="0 0 7 4" className="h-1 w-[7px]"><path d="M0 4h7L3.500 0z" fill="#8c8c8c" /></svg>
              </div>
              <div className="w-[101px] border-r border-[#dcdcdc] pl-[9px]">Comments</div>
            </div>
            <ul className="grid grid-cols-[repeat(auto-fill,218px)] gap-y-1 pl-px">
              {items.map((item) => (
                <li
                  key={item.id}
                  className={`flex h-[52px] items-center gap-1 rounded-[3px] border pl-px ${
                    item.selected ? 'border-[#f0cf9c] bg-linear-to-b from-[#fdf1dc] to-[#fbdcae]' : 'border-transparent'
                  }`}
                >
                  {item.icon}
                  <span className="truncate pb-0.5">{item.name}</span>
                </li>
              ))}
            </ul>
          </main>
        </div>

        <footer className="flex h-[30px] items-center border-t border-[#8f8f8f] bg-linear-to-b from-[#8a8a8a] to-[#464646] text-white">
          <button aria-label="Start" className="flex h-7 w-[77px] items-center justify-center rounded-r-lg border-r border-[#8d9596] bg-linear-to-b from-[#6f787a] via-[#343c3e] to-[#4c5557]">
            <WindowsFlag />
          </button>
          <button className="ml-1.5 flex h-[26px] w-[138px] items-center gap-1 rounded-[2px] border border-[#2c2c2c] bg-[#484848] pl-[5px]">
            <svg viewBox="0 0 14 13" className="h-[13px] w-[14px]">
              <path d="M0 2l1-2h5l1 2h7v11H0z" fill="#f6e27e" stroke="#a98718" strokeWidth="0.5" />
              <path d="M3 4h9v7H3z" fill="#222" />
              <path d="M4 5l4 5M9 5l-3 5M8 8l3 2" stroke="#fff" />
            </svg>
            Control Panel
          </button>
          <button aria-label="Show hidden icons" className="ml-auto mr-1.5">
            <svg viewBox="0 0 16 16" className="size-4">
              <circle cx="8" cy="8" r="7.5" fill="#e2e2e2" />
              <path d="M4.500 4L8 7l3.500-3M4.500 8.500l3.500 3 3.500-3" fill="none" stroke="#333" strokeWidth="1.5" />
            </svg>
          </button>
        </footer>
      </div>

      <SidePanel />

      <Dialog />

      <svg viewBox="0 0 14 22" className="pointer-events-none absolute left-[211px] top-[533px] h-[22px] w-[14px]">
        <path d="M1 0v16l4-4 3 7 3-1-3-7h5z" fill="#fff" stroke="#222" />
      </svg>

      <div className="pointer-events-none absolute bottom-0 right-6 flex items-end gap-2 font-['Open_Sans',sans-serif] text-[18px] leading-[50px] text-[#d4d8da]/75">
        <svg viewBox="0 0 52 32" className="h-8 w-[52px]">
          <path d="M4 12l25 8L42 1h5L30 28 4 20z" fill="#5c5c5c" />
          <path d="M13 1h27L28 17 5 11z" fill="#dcdcdc" />
          <path d="M11 2C5 6 0 15 3 20l26 9L48 1" fill="none" stroke="#cfcfcf" strokeWidth="3" />
        </svg>
        <span>The Collection Book</span>
      </div>
    </div>
  );
}
